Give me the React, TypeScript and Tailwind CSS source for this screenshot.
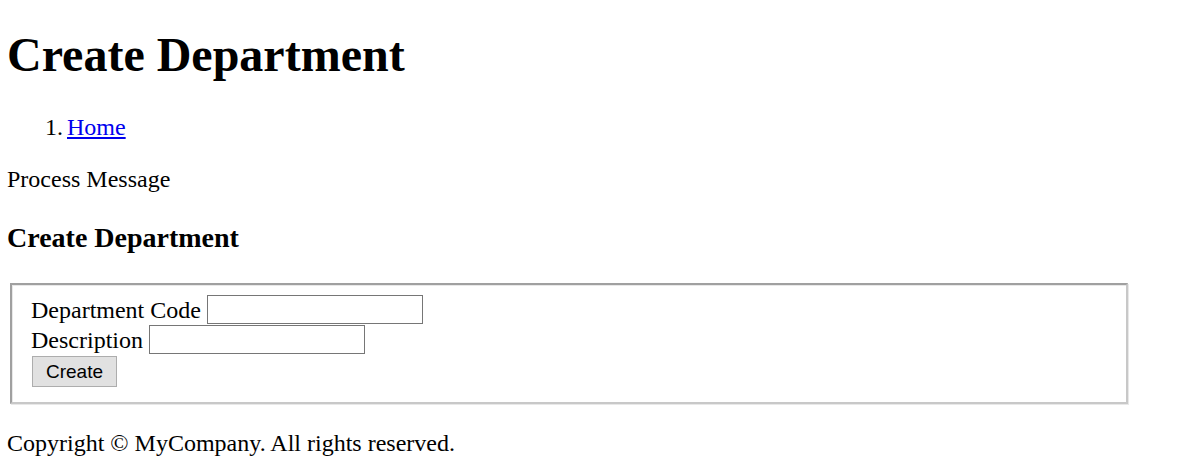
export default function App() {
  const serif = "font-['Liberation_Serif','Times_New_Roman',serif]";
  return (
    <div className={`${serif} bg-white text-black w-[1201px] h-[471px] overflow-hidden px-[7px]`}>
      <h1 className="pt-[27px] text-[48px] leading-[55px] font-bold">Create Department</h1>
      <ol className="mt-[31px] pl-[38px] text-[24px] leading-[28px]">
        <li className="flex">
          <span className="w-[22px]">1.</span>
          <a href="#" className="text-[#0000ee] underline">Home</a>
        </li>
      </ol>
      <p className="mt-[24px] text-[24px] leading-[28px]">Process Message</p>
      <h3 className="mt-[29px] text-[28px] leading-[32px] font-bold">Create Department</h3>
      <div className="mt-[29px] ml-[3px] w-[1118px] border-2 border-t-[#a0a0a0] border-l-[#a0a0a0] border-r-[#c8c8c8] border-b-[#c8c8c8] shadow-[inset_1px_1px_0_#e8e8e8,1px_1px_0_#e8e8e8] pl-[19px] pt-[9px] pb-[15px] text-[24px]">
        <div className="flex items-center h-[30px] gap-[6px]">
          <span className="leading-[28px] pt-[1px]">Department Code</span>
          <div className="w-[216px] h-[29px] border border-[#767676] bg-white" />
        </div>
        <div className="flex items-center h-[30px] gap-[6px]">
          <span className="leading-[28px] pt-[1px]">Description</span>
          <div className="w-[216px] h-[29px] border border-[#767676] bg-white" />
        </div>
        <button className="block mt-[2px] ml-[1px] w-[85px] h-[31px] bg-[#e1e1e1] border border-[#adadad] font-['Liberation_Sans',Arial,sans-serif] text-[19px] leading-[22px] text-black">
          Create
        </button>
      </div>
      <p className="mt-[25px] text-[24px] leading-[28px]">Copyright © MyCompany. All rights reserved.</p>
    </div>
  );
}
